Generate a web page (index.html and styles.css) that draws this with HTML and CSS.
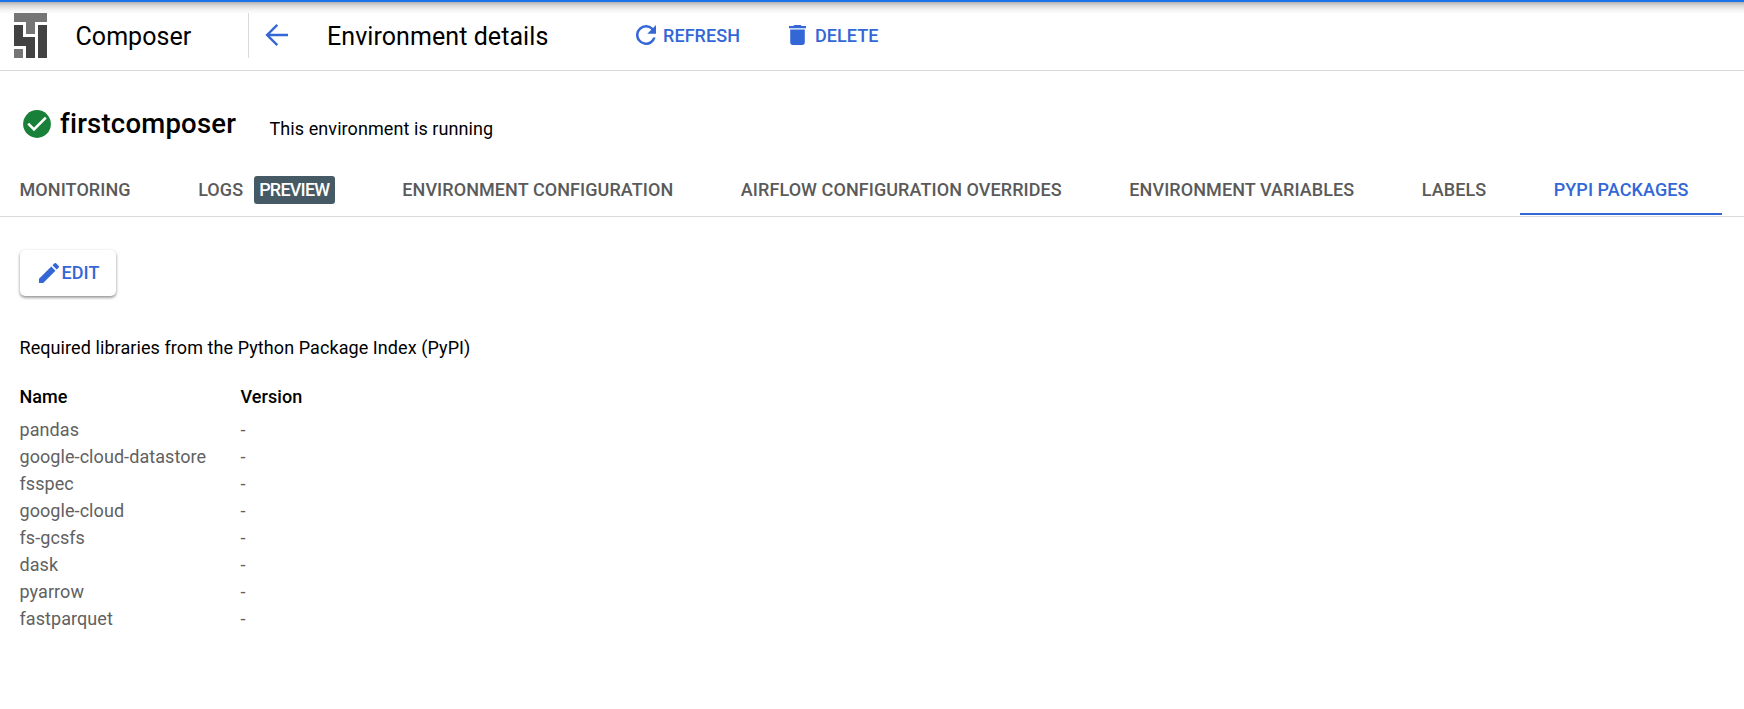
FILE: index.html
```html
<!DOCTYPE html>
<html lang="en">
<head>
<meta charset="utf-8">
<title>Environment details</title>
<link rel="stylesheet" href="styles.css">
</head>
<body>
<header class="topbar">
  <svg class="logo" viewBox="0 0 33 45" width="33" height="45" shape-rendering="crispEdges">
    <path fill="#757575" d="M0 0h33v9H21v12h-9V9H0zM0 36h9v9H0z"/>
    <path fill="#424242" d="M0 12h9v12h12v21h-9V33H0zM24 12h9v33h-9z"/>
  </svg>
  <span class="product">Composer</span>
  <div class="page-head">
    <svg class="back" viewBox="0 0 24 24" width="24" height="24"><path d="M23 12H2.5M12.3 1.8L2.1 12l10.2 10.2" fill="none" stroke="#3367d6" stroke-width="2.4"/></svg>
    <h1 class="page-title">Environment details</h1>
  </div>
  <button class="action refresh">
    <svg viewBox="4 4 16 16" width="20" height="20"><path fill="#3367d6" d="M17.65 6.35A7.96 7.96 0 0 0 12 4a8 8 0 1 0 7.73 10h-2.08A6 6 0 1 1 12 6c1.66 0 3.14.69 4.22 1.78L13 11h7V4z"/></svg>
    <span>REFRESH</span>
  </button>
  <button class="action delete">
    <svg viewBox="5 3 14 18" width="17" height="20" preserveAspectRatio="none"><path fill="#3367d6" d="M6 19c0 1.1.9 2 2 2h8c1.1 0 2-.9 2-2V7H6zM19 4h-3.5l-1-1h-5l-1 1H5v2h14z"/></svg>
    <span>DELETE</span>
  </button>
</header>
<section class="summary">
  <svg class="ok" viewBox="0 0 28 28" width="28" height="28"><circle cx="14" cy="14" r="13.9" fill="#188038"/><path d="M5.2 13.7l5.8 5.8L22.8 7.7" fill="none" stroke="#fff" stroke-width="2.6"/></svg>
  <h2 class="env-name">firstcomposer</h2>
  <span class="env-state">This environment is running</span>
</section>
<nav class="tabs">
  <a class="tab">MONITORING</a>
  <a class="tab">LOGS<span class="badge">PREVIEW</span></a>
  <a class="tab">ENVIRONMENT CONFIGURATION</a>
  <a class="tab">AIRFLOW CONFIGURATION OVERRIDES</a>
  <a class="tab">ENVIRONMENT VARIABLES</a>
  <a class="tab">LABELS</a>
  <a class="tab active">PYPI PACKAGES</a>
</nav>
<main class="content">
  <button class="edit">
    <svg viewBox="3 3 18 18" width="20" height="20"><path fill="#3367d6" d="M3 17.25V21h3.75L17.81 9.94l-3.75-3.75zM20.71 7.04a1 1 0 0 0 0-1.41l-2.34-2.34a1 1 0 0 0-1.41 0l-1.83 1.83 3.75 3.75z"/></svg>
    <span>EDIT</span>
  </button>
  <p class="intro">Required libraries from the Python Package Index (PyPI)</p>
  <table class="packages">
    <thead><tr><th>Name</th><th>Version</th></tr></thead>
    <tbody>
      <tr><td>pandas</td><td>-</td></tr>
      <tr><td>google-cloud-datastore</td><td>-</td></tr>
      <tr><td>fsspec</td><td>-</td></tr>
      <tr><td>google-cloud</td><td>-</td></tr>
      <tr><td>fs-gcsfs</td><td>-</td></tr>
      <tr><td>dask</td><td>-</td></tr>
      <tr><td>pyarrow</td><td>-</td></tr>
      <tr><td>fastparquet</td><td>-</td></tr>
    </tbody>
  </table>
</main>
</body>
</html>
```
FILE: styles.css
```css
* { box-sizing: border-box; }
body {
  margin: 0;
  height: 709px;
  overflow: hidden;
  background: #fff;
  color: #000;
  font: 400 18px/27px Roboto, sans-serif;
  letter-spacing: 0.07px;
}
h1, h2, p { margin: 0; }
button { border: 0; background: none; padding: 0; font: inherit; letter-spacing: inherit; }
svg { display: block; flex: none; }

.topbar {
  display: flex;
  align-items: center;
  height: 71px;
  padding: 0 0 2px 14px;
  border-top: 2px solid #1a73e8;
  border-bottom: 1px solid #dadada;
  background: linear-gradient(#b0b0b0, #d4d4d4 3px, #f3f3f3 8px, #fff 12px);
}
.product { width: 172px; margin: 2px 0 0 28.5px; font-size: 25px; letter-spacing: 0.05px; }
.page-head {
  display: flex;
  align-items: center;
  height: 45px;
  width: 387.5px;
  padding-left: 16px;
  border-left: 1px solid #dadada;
}
.page-title { margin: 2px 0 0 38.5px; font-size: 25px; font-weight: 400; letter-spacing: 0.07px; white-space: nowrap; }
.action { display: flex; align-items: center; color: #3367d6; font-weight: 500; }
.refresh { width: 153px; margin-left: 1px; gap: 7px; }
.delete { gap: 9px; }

.summary { display: flex; align-items: center; height: 105px; padding-left: 22.5px; }
.summary .ok { margin-top: 1px; }
.env-name { width: 209.5px; margin: 1px 0 0 9.5px; font-size: 27.5px; font-weight: 500; letter-spacing: 0.22px; line-height: 36px; }
.env-state { margin-top: 9px; letter-spacing: 0.08px; }

.tabs {
  display: flex;
  height: 41px;
  padding-left: 19.5px;
  gap: 67.5px;
  border-bottom: 1px solid #dadada;
  color: #5a5a5a;
  font-weight: 500;
  letter-spacing: 0.08px;
}
.tab { display: flex; align-items: flex-start; height: 39px; white-space: nowrap; }
.badge {
  height: 28px;
  margin-left: 11px;
  padding: 0 5.5px 0 5px;
  border-radius: 3px;
  background: #455a64;
  color: #fff;
  letter-spacing: -0.8px;
}
.active { margin: 0 -33.5px; padding: 0 33.5px; border-bottom: 2px solid #3367d6; color: #3367d6; }

.content { padding: 33px 19.5px 0; }
.edit {
  display: flex;
  align-items: center;
  gap: 2.5px;
  width: 96px;
  height: 46px;
  margin-left: 0.5px;
  padding: 0 0 1px 19px;
  border-radius: 5px;
  box-shadow: 0 1px 3px rgba(0,0,0,.25), 0 2px 3px rgba(0,0,0,.25);
  color: #3367d6;
  font-weight: 500;
}
.intro { margin-top: 38px; letter-spacing: 0.08px; }
.packages { margin-top: 19px; border-collapse: collapse; table-layout: fixed; width: 442px; }
.packages th, .packages td { width: 221px; height: 27px; padding: 0; text-align: left; color: #616161; }
.packages th { height: 36px; padding-bottom: 4px; color: #000; font-weight: 500; }
```
